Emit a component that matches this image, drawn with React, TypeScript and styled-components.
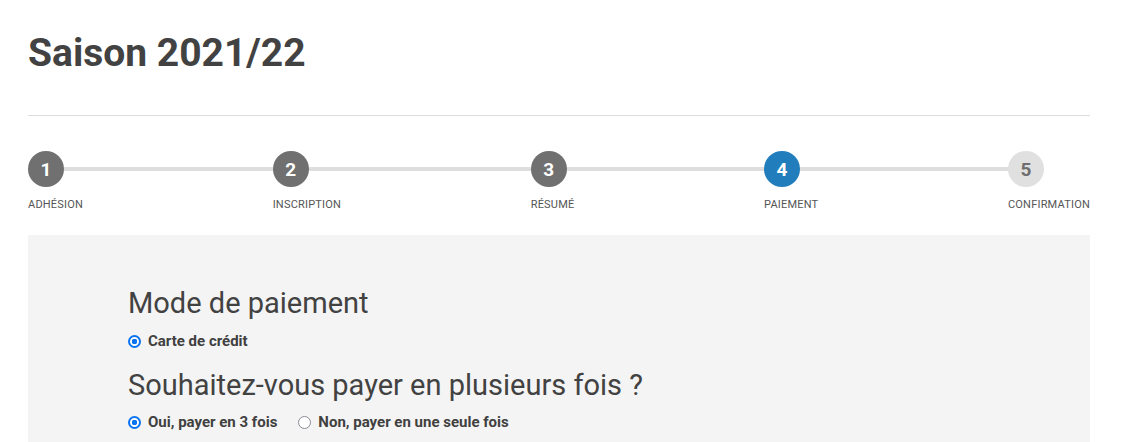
import React from "react";
import styled, { createGlobalStyle } from "styled-components";

const GlobalStyle = createGlobalStyle`
  body {
    margin: 0;
    background: #fff;
    font-family: Roboto, "Liberation Sans", sans-serif;
    color: #444;
  }
`;

const Page = styled.div`
  padding: 29px 36px 0 28px;
`;

const Title = styled.h1`
  margin: 0;
  font-size: 39px;
  line-height: 48px;
  font-weight: 700;
  color: #424242;
`;

const Divider = styled.hr`
  margin: 38px 0 0;
  border: 0;
  border-top: 1px solid #dddddd;
`;

const Stepper = styled.ol`
  position: relative;
  display: flex;
  justify-content: space-between;
  list-style: none;
  margin: 35px 0 0;
  padding: 0;
`;

const Track = styled.div`
  position: absolute;
  left: 18px;
  right: 50px;
  top: 16px;
  height: 4px;
  background: #dedede;
`;

const Step = styled.li`
  position: relative;
  display: flex;
  flex-direction: column;
  align-items: flex-start;
`;

const Bubble = styled.span<{ $state: "done" | "active" | "todo" }>`
  display: flex;
  align-items: center;
  justify-content: center;
  width: 36px;
  height: 36px;
  border-radius: 50%;
  font-size: 19px;
  font-weight: 700;
  background: ${(p) =>
    p.$state === "active" ? "#217dbb" : p.$state === "done" ? "#707070" : "#e0e0e0"};
  color: ${(p) => (p.$state === "todo" ? "#6e6e6e" : "#fff")};
`;

const StepLabel = styled.span`
  margin-top: 11px;
  font-size: 11px;
  line-height: 13px;
  letter-spacing: 0.2px;
  text-transform: uppercase;
  color: #555;
  white-space: nowrap;
`;

const Panel = styled.section`
  margin-top: 24px;
  background: #f4f4f4;
  padding: 51px 100px 0;
  height: 156px;
`;

const Heading = styled.h2<{ $gap?: number }>`
  margin: ${(p) => p.$gap ?? 0}px 0 0;
  font-size: 29px;
  line-height: 34px;
  font-weight: 400;
  color: #424242;
`;

const Options = styled.div<{ $gap: number }>`
  display: flex;
  gap: 21px;
  margin-top: ${(p) => p.$gap}px;
`;

const Option = styled.label`
  display: flex;
  align-items: center;
  gap: 7px;
  font-size: 15px;
  line-height: 20px;
  font-weight: 700;
  color: #404040;
`;

const Radio = styled.span<{ $checked?: boolean }>`
  box-sizing: border-box;
  width: 13px;
  height: 13px;
  border-radius: 50%;
  border: ${(p) => (p.$checked ? "2px solid #0a74f0" : "1.5px solid #8d8a95")};
  background: ${(p) => (p.$checked ? "radial-gradient(circle, #0a74f0 0 2.6px, #fff 3px)" : "#fff")};
`;

const steps = [
  { n: 1, label: "Adhésion", state: "done" as const },
  { n: 2, label: "Inscription", state: "done" as const },
  { n: 3, label: "Résumé", state: "done" as const },
  { n: 4, label: "Paiement", state: "active" as const },
  { n: 5, label: "Confirmation", state: "todo" as const },
];

export default function App() {
  return (
    <>
      <GlobalStyle />
      <Page>
        <Title>Saison 2021/22</Title>
        <Divider />
        <Stepper>
          <Track />
          {steps.map((s) => (
            <Step key={s.n}>
              <Bubble $state={s.state}>{s.n}</Bubble>
              <StepLabel>{s.label}</StepLabel>
            </Step>
          ))}
        </Stepper>
        <Panel>
          <Heading>Mode de paiement</Heading>
          <Options $gap={11}>
            <Option>
              <Radio $checked />
              Carte de crédit
            </Option>
          </Options>
          <Heading $gap={17}>Souhaitez-vous payer en plusieurs fois ?</Heading>
          <Options $gap={10}>
            <Option>
              <Radio $checked />
              Oui, payer en 3 fois
            </Option>
            <Option>
              <Radio />
              Non, payer en une seule fois
            </Option>
          </Options>
        </Panel>
      </Page>
    </>
  );
}
